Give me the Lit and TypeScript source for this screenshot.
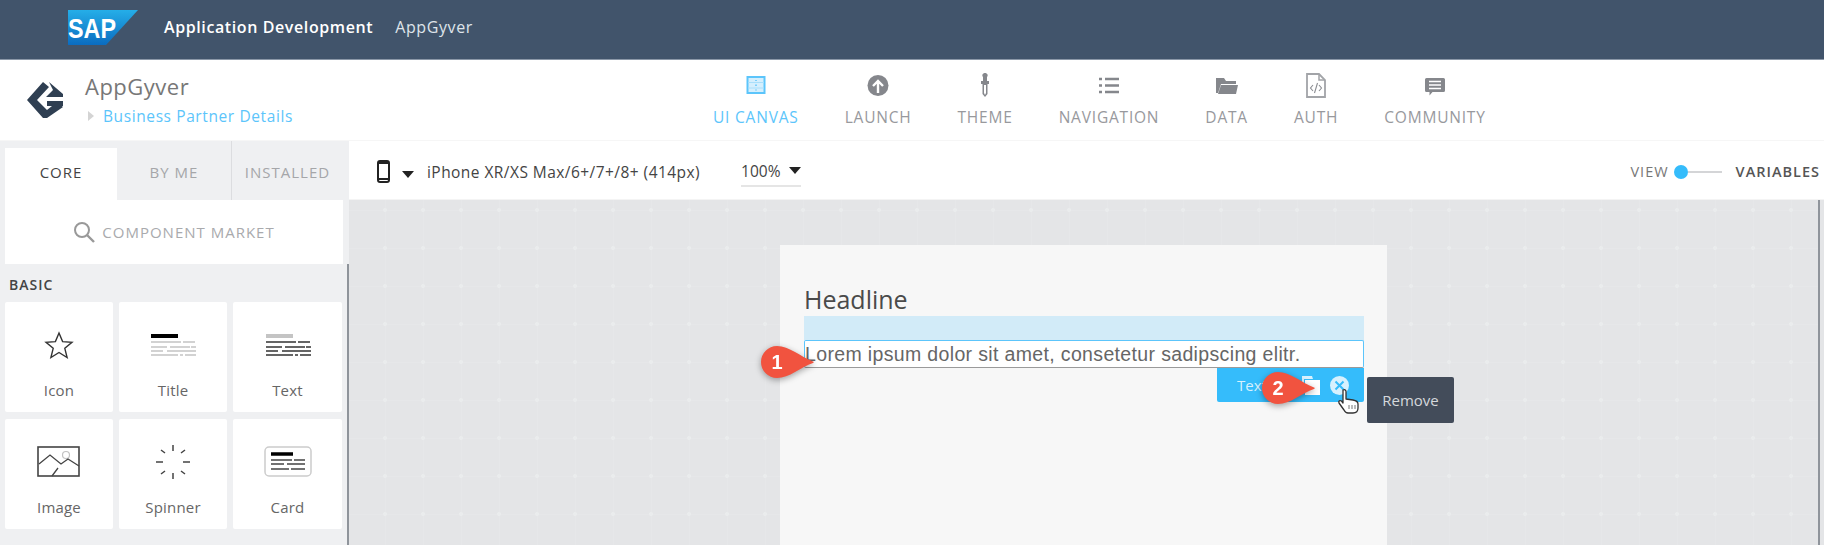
import { LitElement, html, css, svg } from 'lit';
import { customElement } from 'lit/decorators.js';

const navItems = [
  { label: 'UI CANVAS', active: true, icon: svg`<rect x="2.500" y="4" width="17" height="16" fill="#d5effd" stroke="#5cc5fb" stroke-width="2"/><path d="M3 9.500h16M3 15h16" stroke="#a8dffb" stroke-width="1"/><path d="M11 7v1M11 11.500v1.500M11 16.500v1" stroke="#5cc5fb" stroke-width="1.500"/>` },
  { label: 'LAUNCH', icon: svg`<ellipse cx="11" cy="12.500" rx="10.500" ry="10.500" fill="#85878c"/><path d="M11 20v-12M6 13l5-5 5 5" fill="none" stroke="#fff" stroke-width="2.400"/>` },
  { label: 'THEME', icon: svg`<path d="M11 0a2.400 2.400 0 0 1 2 4v4h2v3h-1.500v10l-2.500 3-2.500-3v-10h-1.500v-3h2v-4a2.400 2.400 0 0 1 2-4z" fill="#85878c"/><path d="M10 12h2v8l-1 2-1-2z" fill="#fff"/>` },
  { label: 'NAVIGATION', icon: svg`<path d="M1 6h3M7 6h14M1 12.500h3M7 12.500h14M1 19h3M7 19h14" stroke="#85878c" stroke-width="2.600"/>` },
  { label: 'DATA', icon: svg`<path d="M0 5h8l2 3h10v3h-15l-3 9h-2z M5 12h17l-2 9h-18z" fill="#85878c"/>` },
  { label: 'AUTH', icon: svg`<path d="M2 1h12l6 6v17h-18z" fill="#fff" stroke="#a2a4a8" stroke-width="1.800"/><path d="M14 1v6h6" fill="none" stroke="#a2a4a8" stroke-width="1.500"/><path d="M8 12l-2.500 3 2.500 3M14 12l2.500 3-2.500 3M12.500 10l-3 10" fill="none" stroke="#8b8d92" stroke-width="1.100"/>` },
  { label: 'COMMUNITY', icon: svg`<path d="M2.500 5h17a1.500 1.500 0 0 1 1.500 1.500v11a1.500 1.500 0 0 1-1.500 1.500h-11l-3 3.500v-3.500h-3a1.500 1.500 0 0 1-1.500-1.500v-11a1.500 1.500 0 0 1 1.500-1.500z" fill="#85878c"/><path d="M5 8.500h12M5 12h12M5 15.500h12" stroke="#fff" stroke-width="1.500"/>` },
];

const rows = (list: number[][], ys: number[], c: string, w: number) =>
  list.map((segs, i) => {
    let d = '';
    for (let k = 0; k < segs.length; k += 2) d += `M${segs[k]} ${ys[i]}H${segs[k + 1]}`;
    return svg`<path d=${d} stroke=${c} stroke-width=${w}/>`;
  });

const textRows = [
  [1, 31, 33, 45],
  [1, 17, 20, 40, 41, 46],
  [1, 13, 17, 46],
  [1, 28, 30, 33, 35, 46],
];

const cards = [
  { label: 'Icon', w: 30, h: 28, icon: svg`<path d="M15 2l3.600 8.600 9.400.7-7.200 6 2.300 9.200-8.100-5-8.100 5 2.300-9.200-7.200-6 9.400-.7z" fill="none" stroke="#333" stroke-width="1.400"/>` },
  { label: 'Title', w: 46, h: 24, icon: svg`<path d="M1 3H28" stroke="#000" stroke-width="4"/>${rows(textRows, [9, 14, 18, 22], '#c4c4c4', 1.400)}` },
  { label: 'Text', w: 46, h: 24, icon: svg`<path d="M1 3H28" stroke="#c4c4c4" stroke-width="4"/>${rows(textRows, [9, 14, 18, 22], '#333', 1.500)}` },
  { label: 'Image', w: 44, h: 32, icon: svg`<rect x="1" y="1" width="41" height="29" fill="#fff" stroke="#444" stroke-width="1.600"/><circle cx="29" cy="9" r="3.500" fill="none" stroke="#c2c2c2" stroke-width="1.200"/><path d="M2 18l11-9 11 9 7-5 11 7M21 22l-6 8" fill="none" stroke="#444" stroke-width="1.300"/>` },
  { label: 'Spinner', w: 36, h: 36, icon: svg`<path d="M18 1v6M18 29v6M1 18h7M28 18h7M6 6l4 3M30 6l-4 3M6 30l4-3M30 30l-4-3" stroke="#444" stroke-width="1.500"/>` },
  { label: 'Card', w: 48, h: 32, icon: svg`<rect x="1" y="1" width="46" height="29" rx="4" fill="#fff" stroke="#ccc" stroke-width="1.500"/><path d="M7 8H29" stroke="#000" stroke-width="3.500"/>${rows([[7, 28, 30, 41], [7, 20, 23, 41], [7, 25, 27, 41]], [14, 18, 23], '#444', 1.400)}` },
];

const caret = html`<svg class="caret" width="12" height="7" viewBox="0 0 12 7"><path d="M0 0h12l-6 7z" fill="#222"/></svg>`;

@customElement('app-root')
export class AppRoot extends LitElement {
  static styles = css`
    :host {
      display: block;
      position: relative;
      width: 1824px;
      height: 545px;
      overflow: hidden;
      background: #fff;
      font-family: 'Open Sans', Lato, sans-serif;
      color: #555;
    }

    .topbar {
      height: 60px;
      box-sizing: border-box;
      padding-left: 68px;
      display: flex;
      align-items: center;
      background: #41546b;
      border-bottom: 1px solid #8b98a8;
      color: #fff;
      font-size: 16px;
      letter-spacing: 0.6px;
    }
    .sap { margin-top: -5px; display: block; }
    .sap text { font: bold 28px 'Liberation Sans', sans-serif; fill: #fff; letter-spacing: 0; }
    .app-dev { margin-left: 25px; font-weight: 600; margin-top: -6px; }
    .app-name { margin-left: 22px; color: #dfe4ea; margin-top: -6px; }

    .header {
      height: 81px;
      box-sizing: border-box;
      display: flex;
      border-bottom: 1px solid #f6f6f6;
    }
    .brand { width: 713px; padding-left: 27px; display: flex; align-items: center; box-sizing: border-box; }
    .brand-text { margin-left: 22px; }
    .brand-name { font-size: 22px; color: #777; letter-spacing: 0.5px; line-height: 26px; }
    .crumb { display: flex; align-items: center; gap: 9px; margin-top: 5px; font-size: 15.500px; color: #5cc5fb; line-height: 24px; margin-left: 3px; letter-spacing: 0.6px; }
    .crumb i { border-left: 6px solid #d4d4d4; border-top: 5px solid transparent; border-bottom: 5px solid transparent; }

    .nav { display: flex; gap: 46px; }
    .nav-item {
      display: flex;
      flex-direction: column;
      align-items: center;
      padding-top: 13px;
      font-size: 15.500px;
      letter-spacing: 0.8px;
      color: #98999d;
    }
    .nav-item svg { height: 25px; display: block; }
    .nav-item span { margin-top: 9px; line-height: 20px; }
    .nav-item.active { color: #5cc5fb; }

    .body { display: flex; height: 404px; }

    .sidebar { width: 349px; flex: none; background: #eff0f2; }
    .tabs { height: 59px; box-sizing: border-box; padding: 7px 0 0 5px; display: flex; font-size: 15px; letter-spacing: 1px; }
    .tab { display: flex; align-items: center; justify-content: center; color: #a5a6a9; width: 114px; padding-bottom: 4px; box-sizing: border-box; }
    .tab.on { width: 112px; background: #fff; color: #444; }
    .tab.last { width: 118px; border-left: 1px solid #dcdde0; margin-top: -7px; padding: 7px 6px 4px 0; }
    .market {
      margin-left: 5px;
      width: 338px;
      height: 64px;
      background: #fff;
      display: flex;
      align-items: center;
      justify-content: center;
      gap: 7px;
      font-size: 15px;
      letter-spacing: 1px;
      color: #a9aaad;
    }
    .lower { height: 281px; box-sizing: border-box; border-right: 2px solid #8f949b; padding: 11px 0 0 5px; }
    .basic { font-size: 14px; font-weight: 600; color: #444; padding-left: 4px; line-height: 20px; letter-spacing: 1px; }
    .grid { margin-top: 7px; display: grid; grid-template-columns: 108px 108px 109px; grid-auto-rows: 110px; gap: 7px 6px; }
    .card { background: #fff; border-radius: 2px; display: flex; flex-direction: column; align-items: center; font-size: 15px; letter-spacing: 0.2px; color: #666; position: relative; }
    .card .ic { height: 60px; margin-top: 13px; display: flex; align-items: center; }
    .card .lb { margin-top: 5px; line-height: 20px; }

    .main { flex: 1; min-width: 0; display: flex; flex-direction: column; }
    .toolbar { height: 59px; flex: none; box-sizing: border-box; display: flex; align-items: center; padding: 3px 0 0 28px; font-size: 15.500px; letter-spacing: 0.45px; color: #444; border-bottom: 1px solid #f4f4f4; }
    .device { margin-left: 12px; margin-right: 13px; }
    .zoom { margin-left: 41px; display: flex; align-items: center; gap: 8px; border-bottom: 2px solid #e5e5e5; padding: 3px 0; letter-spacing: 0; }
    .toggle { margin-left: auto; display: flex; align-items: center; padding-right: 4px; font-size: 14.500px; letter-spacing: 1px; color: #777; }
    .toggle .knob { width: 14px; height: 14px; border-radius: 50%; background: #35bcfb; margin-left: 5px; }
    .toggle .track { width: 34px; height: 2px; background: #d4d5d7; margin-right: 14px; }
    .toggle b { font-weight: 600; color: #555; }

    .stage { flex: 1; display: flex; background: #e4e5e7; min-height: 0; }
    .canvas {
      flex: 1;
      display: flex;
      justify-content: center;
      padding-top: 45px;
      background-image:
        radial-gradient(circle at 36px 10px, #eaeced 0, #eaeced 1.500px, transparent 2.500px),
        linear-gradient(transparent 10px, #e6e7e9 10px, #e6e7e9 11px, transparent 11px),
        linear-gradient(90deg, transparent 36px, #e6e7e9 36px, #e6e7e9 37px, transparent 37px);
      background-size: 38px 38px;
    }
    .scroll { width: 2px; background: #8f949b; }
    .gutter { width: 4px; }

    .phone { width: 607px; box-sizing: border-box; background: #f7f7f7; padding: 37px 23px 0 24px; position: relative; }
    .headline { font-size: 25px; line-height: 34px; color: #4a4a4a; }
    .band { height: 24px; background: #d2ebf8; }
    .textbox {
      height: 28px;
      box-sizing: border-box;
      border: 1.500px solid #5cc5fb;
      border-bottom-color: #9a9a9a;
      border-radius: 2px;
      background: #fff;
      display: flex;
      align-items: center;
      font-family: 'Liberation Sans', sans-serif;
      font-size: 19.500px;
      letter-spacing: 0.35px;
      color: #666;
      white-space: nowrap;
    }
    .tools {
      margin-left: auto;
      width: 147px;
      height: 34px;
      box-sizing: border-box;
      padding-left: 20px;
      display: flex;
      align-items: center;
      background: #35bcfb;
      border-radius: 0 0 2px 2px;
      color: #d7f1fe;
      font-size: 15px;
    }
    .copy { margin-left: 33px; display: block; }
    .remove { margin-left: 9px; display: block; }

    .tooltip {
      position: absolute;
      left: 587px;
      top: 132px;
      width: 87px;
      height: 46px;
      display: flex;
      align-items: center;
      justify-content: center;
      background: #434c5a;
      border-radius: 2px;
      color: #d5d8dc;
      font-size: 15px;
    }
    .hand { position: absolute; left: 557px; top: 143px; }
    .callout { position: absolute; filter: drop-shadow(0 2px 3px rgba(0, 0, 0, 0.35)); }
    .callout span {
      position: absolute;
      left: 0;
      top: 0;
      width: 32px;
      height: 32px;
      display: flex;
      align-items: center;
      justify-content: center;
      color: #fff;
      font: 700 20px 'Liberation Sans', sans-serif;
    }
    .callout svg { display: block; }
    .c1 { left: -19px; top: 101px; }
    .c2 { left: 482px; top: 127px; }
  `;

  callout(n: string, cls: string) {
    return html`<div class="callout ${cls}">
      <svg width="53" height="32" viewBox="0 0 53 32"><path d="M16 0c12 0 24 11 36 15.500 1 .4 1 1 0 1.400-12 4-24 15.100-36 15.100a16 16 0 0 1 0-32z" fill="#f1533f"/></svg>
      <span>${n}</span>
    </div>`;
  }

  render() {
    return html`
      <div class="topbar">
        <svg class="sap" width="71" height="35" viewBox="0 0 71 35">
          <defs>
            <linearGradient id="sapg" x1="0" y1="0" x2="0" y2="1">
              <stop offset="0" stop-color="#25aee8" />
              <stop offset="1" stop-color="#0b6cc0" />
            </linearGradient>
          </defs>
          <path d="M0 0h70l-32 35h-38z" fill="url(#sapg)" />
          <text x="0" y="28" textLength="48" lengthAdjust="spacingAndGlyphs">SAP</text>
        </svg>
        <span class="app-dev">Application Development</span>
        <span class="app-name">AppGyver</span>
      </div>

      <div class="header">
        <div class="brand">
          <svg width="36" height="36" viewBox="0 0 36 36">
            <path d="M16 0l6 5-12 13 10 10 10-8 6 5-16 11h-4l-16-18z" fill="#2f3f52" />
            <path d="M22 0l14 12v3h-17l7-7z" fill="#2f3f52" />
            <path d="M20 19h16v5h-16z" fill="#2f3f52" />
          </svg>
          <div class="brand-text">
            <div class="brand-name">AppGyver</div>
            <div class="crumb"><i></i>Business Partner Details</div>
          </div>
        </div>
        <div class="nav">
          ${navItems.map(
            (n) => html`<div class="nav-item ${n.active ? 'active' : ''}">
              <svg viewBox="0 0 22 25" width="22">${n.icon}</svg>
              <span>${n.label}</span>
            </div>`
          )}
        </div>
      </div>

      <div class="body">
        <div class="sidebar">
          <div class="tabs">
            <div class="tab on">CORE</div>
            <div class="tab">BY ME</div>
            <div class="tab last">INSTALLED</div>
          </div>
          <div class="market">
            <svg width="22" height="22" viewBox="0 0 22 22"><circle cx="9" cy="9" r="7" fill="none" stroke="#999" stroke-width="2" /><path d="M14 14l7 7" stroke="#999" stroke-width="2.400" /></svg>
            COMPONENT MARKET
          </div>
          <div class="lower">
            <div class="basic">BASIC</div>
            <div class="grid">
              ${cards.map(
                (c) => html`<div class="card">
                  <div class="ic"><svg width=${c.w} height=${c.h} viewBox="0 0 ${c.w} ${c.h}">${c.icon}</svg></div>
                  <div class="lb">${c.label}</div>
                </div>`
              )}
            </div>
          </div>
        </div>

        <div class="main">
          <div class="toolbar">
            <svg width="13" height="23" viewBox="0 0 13 23"><rect x="1" y="1" width="11" height="21" rx="2" fill="#fff" stroke="#222" stroke-width="2" /><path d="M1 3h11M1 19h11" stroke="#222" stroke-width="2" /></svg>
            <span class="device">${caret}</span>
            <span>iPhone XR/XS Max/6+/7+/8+ (414px)</span>
            <span class="zoom">100% ${caret}</span>
            <div class="toggle">
              <span>VIEW</span><span class="knob"></span><span class="track"></span><b>VARIABLES</b>
            </div>
          </div>
          <div class="stage">
            <div class="canvas">
              <div class="phone">
                <div class="headline">Headline</div>
                <div class="band"></div>
                <div class="textbox">Lorem ipsum dolor sit amet, consetetur sadipscing elitr.</div>
                <div class="tools">
                  <span>Text</span>
                  <svg class="copy" width="21" height="21" viewBox="0 0 21 21"><path d="M2 1h10l1 3H4v12H2z" fill="#d7f1fe" /><path d="M5 5h15v15H5z" fill="#fff" /></svg>
                  <svg class="remove" width="19" height="19" viewBox="0 0 19 19"><circle cx="9.500" cy="9.500" r="9.500" fill="#d7f1fe" /><path d="M5.500 5.500l8 8M13.500 5.500l-8 8" stroke="#35bcfb" stroke-width="2" /></svg>
                </div>
                ${this.callout('1', 'c1')} ${this.callout('2', 'c2')}
                <svg class="hand" width="24" height="26" viewBox="0 0 24 26">
                  <path d="M6 2c1.500-1 3 0 3 1.500V11l7 1c3 .5 5 2 5 4v4c0 3-2 5-5 5h-5c-2 0-3-1-4-3l-5-7c-1-2 1-3 2.500-2L6 15z" fill="#fff" stroke="#333" stroke-width="1.300" stroke-linejoin="round" />
                  <path d="M12 17v4M15 17v4M18 17v4" stroke="#777" stroke-width="1" />
                </svg>
                <div class="tooltip">Remove</div>
              </div>
            </div>
            <div class="scroll"></div>
            <div class="gutter"></div>
          </div>
        </div>
      </div>
    `;
  }
}
